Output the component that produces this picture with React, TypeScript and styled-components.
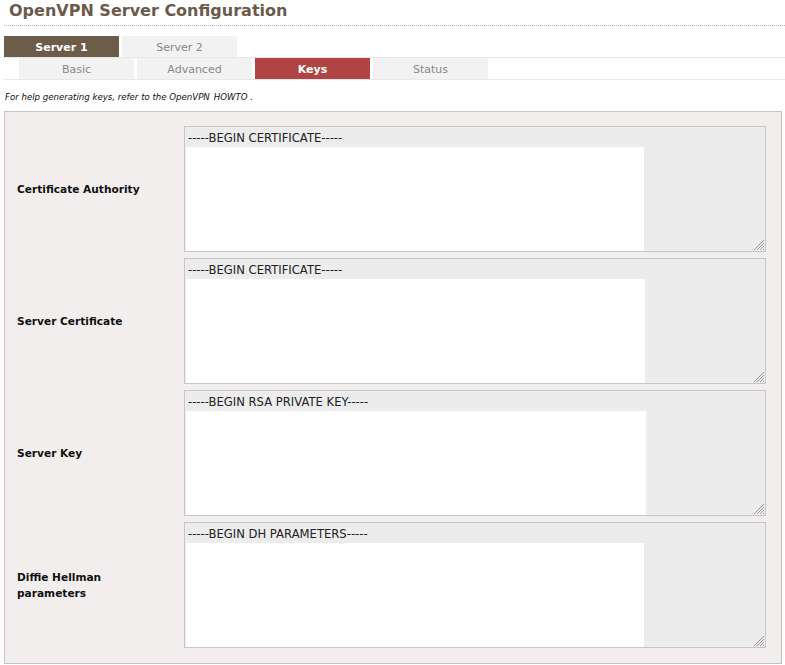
import React from "react";
import styled, { createGlobalStyle } from "styled-components";

const GlobalStyle = createGlobalStyle`
  html, body {
    margin: 0;
    padding: 0;
    background: #ffffff;
    font-family: "DejaVu Sans", Verdana, sans-serif;
  }
`;

const Page = styled.div`
  width: 785px;
  padding: 0 0 0 4px;
  box-sizing: border-box;
`;

const Title = styled.h1`
  margin: 0;
  padding: 1px 0 4px 5px;
  font-size: 16px;
  line-height: 20px;
  font-weight: bold;
  color: #6b5a4a;
  border-bottom: 1px dotted #b8b8b8;
`;

const TabRow = styled.div<{ $sub?: boolean }>`
  display: flex;
  gap: 3px;
  margin-top: ${({ $sub }) => ($sub ? "0" : "10px")};
  padding-left: ${({ $sub }) => ($sub ? "15px" : "0")};
  border-top: ${({ $sub }) => ($sub ? "1px solid #e8e8e8" : "none")};
  border-bottom: ${({ $sub }) => ($sub ? "1px solid #e8e8e8" : "none")};
`;

const Tab = styled.div<{ $active?: boolean; $color?: string }>`
  width: 115px;
  height: 21px;
  line-height: 24px;
  text-align: center;
  font-size: 11px;
  background: ${({ $active, $color }) => ($active ? $color : "#f2f2f2")};
  color: ${({ $active }) => ($active ? "#ffffff" : "#888888")};
  font-weight: ${({ $active }) => ($active ? "bold" : "normal")};
  overflow: hidden;
`;

const Help = styled.p`
  margin: 11px 0 0 1px;
  font-size: 8.6px;
  line-height: 12px;
  font-style: italic;
  color: #111;

  a {
    color: #111;
    text-decoration: none;
    margin-left: 4px;
  }
`;

const Panel = styled.div`
  margin-top: 8px;
  width: 778px;
  box-sizing: border-box;
  border: 1px solid #c3c3c3;
  background: #f2eeed;
  padding: 14px 16px 15px 12px;
  display: flex;
  flex-direction: column;
  gap: 6px;
`;

const Row = styled.div`
  display: grid;
  grid-template-columns: 167px 582px;
  align-items: center;
`;

const Label = styled.div`
  font-size: 10.6px;
  line-height: 16px;
  font-weight: bold;
  color: #111;
  width: 130px;
`;

const KeyBox = styled.div`
  position: relative;
  height: 126px;
  box-sizing: border-box;
  border: 1px solid #c6c6c6;
  background: #ececec;
  display: flex;
  flex-direction: column;
`;

const FirstLine = styled.div`
  height: 20px;
  padding-left: 3px;
  font-size: 11.6px;
  line-height: 22px;
  color: #222;
`;

const Blank = styled.div`
  flex: 1;
  margin-left: 1px;
  background: #ffffff;
`;

const Grip = styled.svg`
  position: absolute;
  right: 1px;
  bottom: 1px;
`;

const keys = [
  { label: "Certificate Authority", text: "-----BEGIN CERTIFICATE-----", w: 458 },
  { label: "Server Certificate", text: "-----BEGIN CERTIFICATE-----", w: 459 },
  { label: "Server Key", text: "-----BEGIN RSA PRIVATE KEY-----", w: 460 },
  { label: "Diffie Hellman parameters", text: "-----BEGIN DH PARAMETERS-----", w: 458 },
];

export default function App() {
  return (
    <>
      <GlobalStyle />
      <Page>
        <Title>OpenVPN Server Configuration</Title>
        <TabRow>
          <Tab $active $color="#6e5c4a">Server 1</Tab>
          <Tab>Server 2</Tab>
        </TabRow>
        <TabRow $sub>
          <Tab>Basic</Tab>
          <Tab>Advanced</Tab>
          <Tab $active $color="#b04343">Keys</Tab>
          <Tab>Status</Tab>
        </TabRow>
        <Help>
          For help generating keys, refer to the OpenVPN<a href="#">HOWTO</a> .
        </Help>
        <Panel>
          {keys.map((k) => (
            <Row key={k.label}>
              <Label>{k.label}</Label>
              <KeyBox>
                <FirstLine>{k.text}</FirstLine>
                <Blank style={{ maxWidth: k.w }} />
                <Grip width="11" height="11" viewBox="0 0 11 11">
                  <line x1="11" y1="1" x2="1" y2="11" stroke="#9a9a9a" strokeWidth="1" />
                  <line x1="11" y1="4" x2="4" y2="11" stroke="#9a9a9a" strokeWidth="1" />
                  <line x1="11" y1="7" x2="7" y2="11" stroke="#9a9a9a" strokeWidth="1" />
                  <line x1="11" y1="10" x2="10" y2="11" stroke="#9a9a9a" strokeWidth="1" />
                </Grip>
              </KeyBox>
            </Row>
          ))}
        </Panel>
      </Page>
    </>
  );
}
